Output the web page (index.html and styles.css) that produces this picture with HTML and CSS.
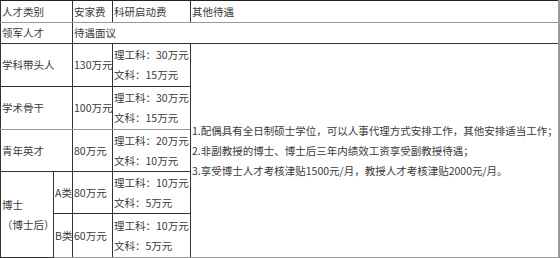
FILE: index.html
```html
<!DOCTYPE html>
<html lang="zh-CN">
<head>
<meta charset="utf-8">
<link rel="stylesheet" href="styles.css">
</head>
<body>
<table class="talent">
  <colgroup>
    <col class="c1"><col class="c2"><col class="c3"><col class="c4"><col class="c5">
  </colgroup>
  <tr class="r-head">
    <td colspan="2">人才类别</td>
    <td>安家费</td>
    <td>科研启动费</td>
    <td class="edge">其他待遇</td>
  </tr>
  <tr class="r-one">
    <td colspan="2">领军人才</td>
    <td colspan="3" class="edge">待遇面议</td>
  </tr>
  <tr class="r-two">
    <td colspan="2">学科带头人</td>
    <td>130万元</td>
    <td>理工科：30万元<br>文科：15万元</td>
    <td rowspan="6" class="desc edge">1.配偶具有全日制硕士学位，可以人事代理方式安排工作，其他安排适当工作；<br>2.非副教授的博士、博士后三年内绩效工资享受副教授待遇；<br>3.享受博士人才考核津贴1500元/月，教授人才考核津贴2000元/月。</td>
  </tr>
  <tr class="r-three">
    <td colspan="2">学术骨干</td>
    <td>100万元</td>
    <td>理工科：30万元<br>文科：15万元</td>
  </tr>
  <tr class="r-four">
    <td colspan="2">青年英才</td>
    <td>80万元</td>
    <td>理工科：20万元<br>文科：10万元</td>
  </tr>
  <tr class="r-five">
    <td rowspan="2">博士<br>（博士后）</td>
    <td>A类</td>
    <td>80万元</td>
    <td>理工科：10万元<br>文科：5万元</td>
  </tr>
  <tr class="r-six">
    <td>B类</td>
    <td>60万元</td>
    <td>理工科：10万元<br>文科：5万元</td>
  </tr>
</table>
</body>
</html>
```
FILE: styles.css
```css
html, body {
  margin: 0;
  padding: 0;
  background: #ffffff;
}

.talent {
  border-collapse: collapse;
  table-layout: fixed;
  width: 558px;
  font-family: "Noto Sans CJK SC", "Microsoft YaHei", sans-serif;
  font-size: 10.5px;
  line-height: 20px;
  color: #3a3a3a;
}

.c1 { width: 53px; }
.c2 { width: 19px; }
.c3 { width: 40px; }
.c4 { width: 78px; }
.c5 { width: 368px; }

.talent td {
  border: 1px solid #333333;
  padding: 0 0 0 1px;
  vertical-align: middle;
  text-align: left;
  white-space: nowrap;
  overflow: hidden;
}

.r-head td { height: 21px; border-top-color: #222; border-bottom-color: #9a9a9a; }
.r-one td { height: 20px; border-top-color: #9a9a9a; }
.r-two td { height: 42px; }
.r-three td { height: 42px; border-bottom-color: #9a9a9a; }
.r-four td { height: 41px; border-top-color: #9a9a9a; }
.r-five td { height: 41px; }
.r-six td { height: 43px; border-bottom-color: #9a9a9a; }

.talent .edge { border-right: 2px solid #9a9a9a; }
.talent .desc { border-bottom-color: #9a9a9a; }
```
